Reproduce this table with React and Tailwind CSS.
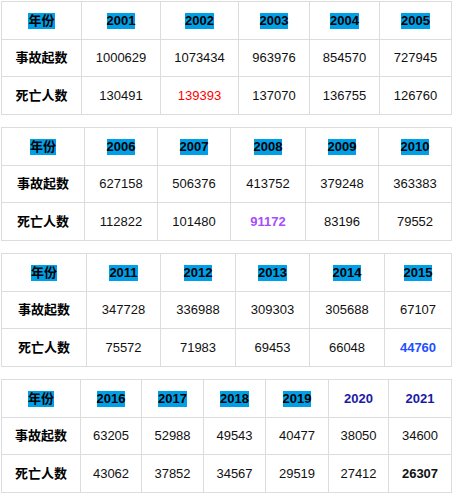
import React from "react";

const tables = [
  {
    widths: [80, 79, 78, 71, 70, 72],
    years: ["2001", "2002", "2003", "2004", "2005"],
    acc: ["1000629", "1073434", "963976", "854570", "727945"],
    dead: ["130491", "139393", "137070", "136755", "126760"],
    deadStyle: { 1: "text-[#ff0000]" },
  },
  {
    widths: [83, 73, 73, 75, 73, 73],
    years: ["2006", "2007", "2008", "2009", "2010"],
    acc: ["627158", "506376", "413752", "379248", "363383"],
    dead: ["112822", "101480", "91172", "83196", "79552"],
    deadStyle: { 2: "text-[#a64dff] font-bold" },
  },
  {
    widths: [85, 74, 75, 74, 75, 67],
    years: ["2011", "2012", "2013", "2014", "2015"],
    acc: ["347728", "336988", "309303", "305688", "67107"],
    dead: ["75572", "71983", "69453", "66048", "44760"],
    deadStyle: { 4: "text-[#1f4fff] font-bold" },
  },
  {
    widths: [79, 61, 62, 62, 63, 60, 63],
    years: ["2016", "2017", "2018", "2019", "2020", "2021"],
    acc: ["63205", "52988", "49543", "40477", "38050", "34600"],
    dead: ["43062", "37852", "34567", "29519", "27412", "26307"],
    deadStyle: { 5: "font-bold" },
    plainYears: { 4: true, 5: true },
  },
];

function Hl({ children }) {
  return (
    <span className="inline-block h-[16px] bg-[#00a0e9] leading-[16px] font-bold text-black">
      {children}
    </span>
  );
}

function Table({ t }) {
  return (
    <table className="w-[449px] table-fixed border-collapse text-center text-[13px] text-[#111]">
      <colgroup>
        {t.widths.map((w, i) => (
          <col key={i} style={{ width: w }} />
        ))}
      </colgroup>
      <tbody>
        <tr className="h-[38px]">
          <td className="border border-[#dcdcdc] p-0">
            <Hl>年份</Hl>
          </td>
          {t.years.map((y, i) => (
            <td key={y} className="border border-[#dcdcdc] p-0">
              {t.plainYears && t.plainYears[i] ? (
                <span className="font-bold text-[#1a1aa6]">{y}</span>
              ) : (
                <Hl>{y}</Hl>
              )}
            </td>
          ))}
        </tr>
        <tr className="h-[37px]">
          <td className="border border-[#dcdcdc] p-0 font-bold text-black">事故起数</td>
          {t.acc.map((v, i) => (
            <td key={i} className="border border-[#dcdcdc] p-0">
              {v}
            </td>
          ))}
        </tr>
        <tr className="h-[38px]">
          <td className="border border-[#dcdcdc] p-0 font-bold text-black">死亡人数</td>
          {t.dead.map((v, i) => (
            <td
              key={i}
              className={`border border-[#dcdcdc] p-0 ${
                (t.deadStyle && t.deadStyle[i]) || ""
              }`}
            >
              {v}
            </td>
          ))}
        </tr>
      </tbody>
    </table>
  );
}

export default function App() {
  return (
    <div
      className="flex h-[495px] w-[452px] flex-col gap-[12px] bg-white pl-[1px] pt-[1px]"
      style={{ fontFamily: '"Liberation Sans", "Noto Sans CJK SC", sans-serif' }}
    >
      {tables.map((t, i) => (
        <Table key={i} t={t} />
      ))}
    </div>
  );
}
